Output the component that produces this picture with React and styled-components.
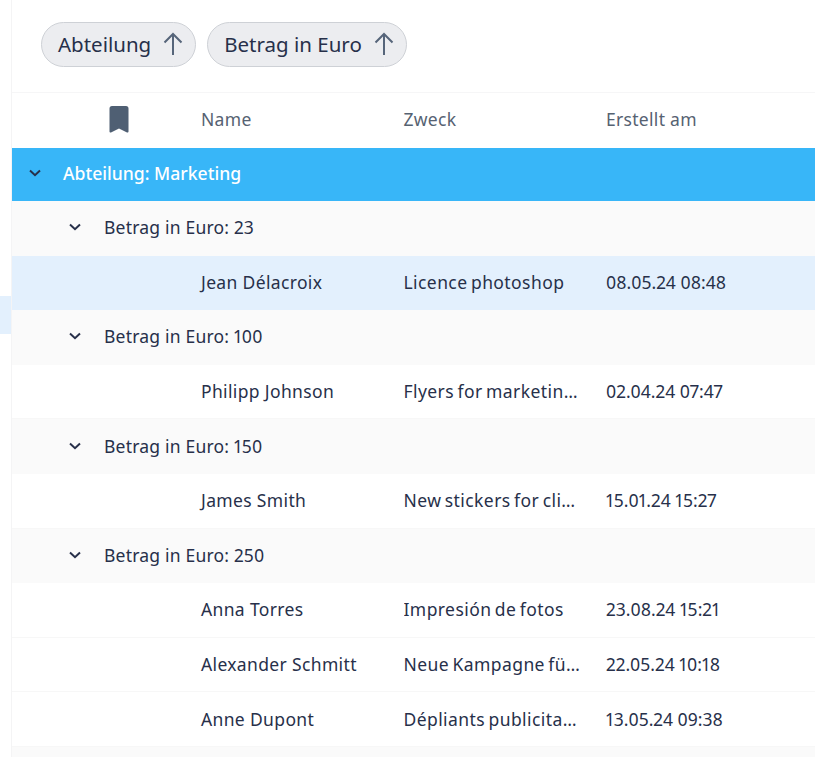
import React from 'react';
import styled, { createGlobalStyle } from 'styled-components';

const GlobalStyle = createGlobalStyle`
  html, body {
    margin: 0;
    padding: 0;
    background: #fff;
    overflow: hidden;
  }
  body {
    font-family: "Noto Sans", "Liberation Sans", sans-serif;
    font-variant-numeric: proportional-nums;
    color: #27304a;
  }
`;

const sortChips = ['Abteilung', 'Betrag in Euro'];

const groups = [
  {
    amount: 23,
    rows: [{ name: 'Jean Délacroix', purpose: 'Licence photoshop', date: '08.05.24 08:48', selected: true }],
  },
  {
    amount: 100,
    rows: [{ name: 'Philipp Johnson', purpose: 'Flyers for marketing campaign', date: '02.04.24 07:47' }],
  },
  {
    amount: 150,
    rows: [{ name: 'James Smith', purpose: 'New stickers for clients', date: '15.01.24 15:27' }],
  },
  {
    amount: 250,
    rows: [
      { name: 'Anna Torres', purpose: 'Impresión de fotos', date: '23.08.24 15:21' },
      { name: 'Alexander Schmitt', purpose: 'Neue Kampagne für Print', date: '22.05.24 10:18' },
      { name: 'Anne Dupont', purpose: 'Dépliants publicitaires', date: '13.05.24 09:38' },
    ],
  },
];

function ArrowUp() {
  return (
    <ChipIcon viewBox="0 0 20 24" fill="none" stroke="#56657a" strokeWidth="2">
      <path d="M10 23V2M1.5 10.5 10 2l8.5 8.5" />
    </ChipIcon>
  );
}

function Chevron() {
  return (
    <ChevronIcon viewBox="0 0 14 8" fill="none" stroke="#27304a" strokeWidth="2">
      <path d="M2 1.5 7 6.2l5-4.7" />
    </ChevronIcon>
  );
}

function Bookmark() {
  return (
    <BookmarkIcon viewBox="0 0 20 27">
      <path
        fill="#4f5f73"
        d="M3 0h14a2.5 2.5 0 0 1 2.5 2.5V25.5c0 1-.8 1.3-1.5 1L10 22.5 2 26.5c-.7.3-1.5 0-1.5-1V2.5A2.5 2.5 0 0 1 3 0z"
      />
    </BookmarkIcon>
  );
}

export default function App() {
  return (
    <Page>
      <GlobalStyle />
      <Gutter>
        <GutterMark />
      </Gutter>
      <Panel>
        <SortBar>
          {sortChips.map((chip) => (
            <Chip key={chip}>
              {chip}
              <ArrowUp />
            </Chip>
          ))}
        </SortBar>
        <HeaderRow>
          <IconCell>
            <Bookmark />
          </IconCell>
          <HeaderCell>Name</HeaderCell>
          <HeaderCell>Zweck</HeaderCell>
          <HeaderCell>Erstellt am</HeaderCell>
        </HeaderRow>
        <TopGroup>
          <Chevron />
          <TopGroupLabel>Abteilung: Marketing</TopGroupLabel>
        </TopGroup>
        {groups.map((group) => (
          <React.Fragment key={group.amount}>
            <SubGroup>
              <Chevron />
              <SubGroupLabel>Betrag in Euro: {group.amount}</SubGroupLabel>
            </SubGroup>
            {group.rows.map((row) => (
              <Row key={row.name} $selected={row.selected}>
                <span />
                <NameCell>{row.name}</NameCell>
                <PurposeCell>{row.purpose}</PurposeCell>
                <DateCell>{row.date}</DateCell>
              </Row>
            ))}
          </React.Fragment>
        ))}
        <SubGroup />
      </Panel>
    </Page>
  );
}

const Page = styled.div`
  display: flex;
  width: 815px;
  height: 757px;
  overflow: hidden;
`;

const Gutter = styled.div`
  width: 11px;
  flex-shrink: 0;
  padding-top: 296px;
  box-sizing: border-box;
`;

const GutterMark = styled.div`
  height: 38px;
  background: #e3f0fd;
`;

const Panel = styled.div`
  flex: 1;
  min-width: 0;
  border-left: 1px solid #f4f4f5;
`;

const SortBar = styled.div`
  display: flex;
  gap: 11px;
  height: 93px;
  padding: 22px 0 0 29px;
  box-sizing: border-box;
  border-bottom: 1px solid #f6f6f7;
`;

const Chip = styled.div`
  display: flex;
  align-items: center;
  gap: 12px;
  height: 45px;
  padding: 0 12px 1px 16px;
  box-sizing: border-box;
  background: #ecedf0;
  border: 1px solid #ced1d6;
  border-radius: 23px;
  font-size: 20.5px;
  white-space: nowrap;
`;

const ChipIcon = styled.svg`
  width: 20px;
  height: 24px;
`;

const ChevronIcon = styled.svg`
  width: 14px;
  height: 8px;
  flex-shrink: 0;
`;

const BookmarkIcon = styled.svg`
  width: 20px;
  height: 27px;
`;

const columns = `
  display: grid;
  grid-template-columns: 189px 202.5px 202.5px 1fr;
  align-items: center;
`;

const HeaderRow = styled.div`
  ${columns}
  height: 55px;
  padding-bottom: 3px;
  box-sizing: border-box;
`;

const IconCell = styled.div`
  display: flex;
  justify-content: flex-end;
  padding-right: 72px;
`;

const HeaderCell = styled.div`
  font-size: 17.5px;
  letter-spacing: 0.3px;
  color: #566272;
`;

const TopGroup = styled.div`
  display: flex;
  align-items: center;
  gap: 21px;
  height: 53px;
  padding: 0 0 4px 16px;
  box-sizing: border-box;
  background: #38b6f8;
`;

const TopGroupLabel = styled.span`
  font-size: 17.6px;
  font-weight: 500;
  color: #fff;
`;

const SubGroup = styled.div`
  display: flex;
  align-items: center;
  gap: 22px;
  height: 54.6px;
  box-sizing: border-box;
  padding: 0 0 2px 56px;
  background: #fafafa;
`;

const SubGroupLabel = styled.span`
  font-size: 17.5px;
  letter-spacing: 0.2px;
`;

const Row = styled.div`
  ${columns}
  height: 54.6px;
  box-sizing: border-box;
  padding-bottom: 1px;
  background: ${(props) => (props.$selected ? '#e3f0fd' : '#fff')};
  border-bottom: 1px solid ${(props) => (props.$selected ? '#e3f0fd' : '#f7f7f7')};
`;

const Cell = styled.div`
  font-size: 17.5px;
  white-space: nowrap;
`;

const NameCell = styled(Cell)`
  letter-spacing: 0.35px;
`;

const PurposeCell = styled(Cell)`
  letter-spacing: 0.42px;
  word-spacing: -1.5px;
  padding-right: 25px;
  overflow: hidden;
  text-overflow: ellipsis;
`;

const DateCell = styled(Cell)``;
